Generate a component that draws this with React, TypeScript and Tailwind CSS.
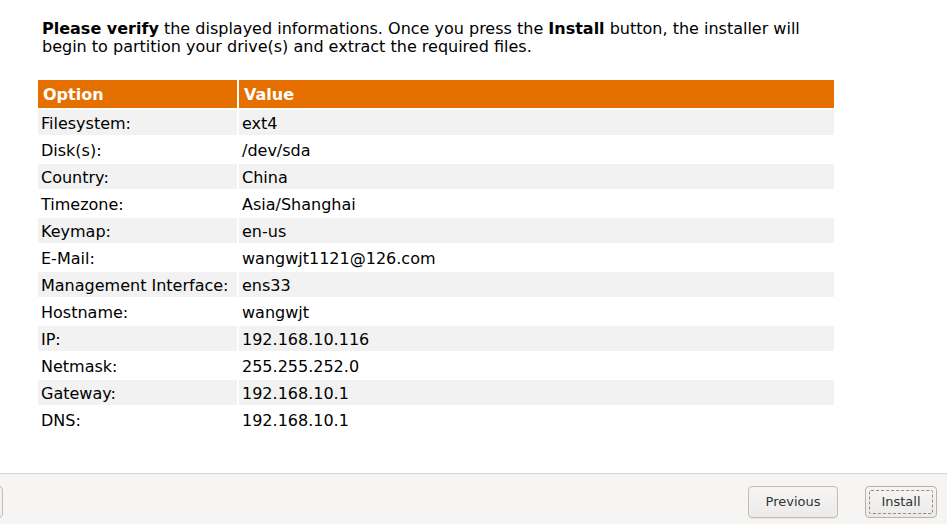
import React from "react";

const rows: [string, string][] = [
  ["Filesystem:", "ext4"],
  ["Disk(s):", "/dev/sda"],
  ["Country:", "China"],
  ["Timezone:", "Asia/Shanghai"],
  ["Keymap:", "en-us"],
  ["E-Mail:", "wangwjt1121@126.com"],
  ["Management Interface:", "ens33"],
  ["Hostname:", "wangwjt"],
  ["IP:", "192.168.10.116"],
  ["Netmask:", "255.255.252.0"],
  ["Gateway:", "192.168.10.1"],
  ["DNS:", "192.168.10.1"],
];

export default function App() {
  return (
    <div
      className="h-[524px] w-[947px] flex flex-col overflow-hidden bg-white text-[#000]"
      style={{ fontFamily: '"DejaVu Sans", sans-serif' }}
    >
      <div className="flex-1">
        <p className="ml-[42px] pt-[20px] w-[790px] text-[16px] leading-[18px]">
          <b>Please verify</b> the displayed informations. Once you press the <b>Install</b> button, the installer will begin to partition your drive(s) and extract the required files.
        </p>
        <table className="ml-[36px] mt-[22px] w-[800px] border-separate border-spacing-[2px] text-[16px] leading-[20px]">
          <thead>
            <tr className="h-[28px] bg-[#e57000] text-white font-bold">
              <th className="w-[199px] text-left pl-[5px] pt-[1px] p-0">Option</th>
              <th className="text-left pl-[5px] pt-[1px] p-0">Value</th>
            </tr>
          </thead>
          <tbody>
            {rows.map(([k, v], i) => (
              <tr key={k} className={`h-[25px] ${i % 2 === 0 ? "bg-[#f2f2f2]" : "bg-white"}`}>
                <td className="pl-[3px] pt-[2px] p-0 whitespace-nowrap">{k}</td>
                <td className="pl-[3px] pt-[2px] p-0">{v}</td>
              </tr>
            ))}
          </tbody>
        </table>
      </div>
      <div className="h-[51px] shrink-0 bg-[#f6f5f4] border-t border-[#d8d4d0] flex items-start pt-[12px] relative">
        <div className="absolute left-[-8px] top-[12px] w-[11px] h-[32px] rounded-[4px] border border-[#c0bdb8] bg-[#f2f1f0]" />
        <div className="ml-auto flex gap-[27px] pr-[10px]">
          <button className="w-[90px] h-[32px] rounded-[4px] border border-[#c0bdb8] bg-gradient-to-b from-[#f6f5f4] to-[#edebe9] text-[13px] text-[#2e3436] shadow-[0_1px_0_rgba(0,0,0,0.05)]">
            Previous
          </button>
          <button className="w-[72px] h-[32px] rounded-[4px] border border-[#b6b2ad] bg-gradient-to-b from-[#f6f5f4] to-[#edebe9] text-[13px] text-[#2e3436] p-[3px]">
            <span className="flex items-center justify-center w-full h-full border border-dashed border-[#8f8b86] rounded-[2px]">
              Install
            </span>
          </button>
        </div>
      </div>
    </div>
  );
}
